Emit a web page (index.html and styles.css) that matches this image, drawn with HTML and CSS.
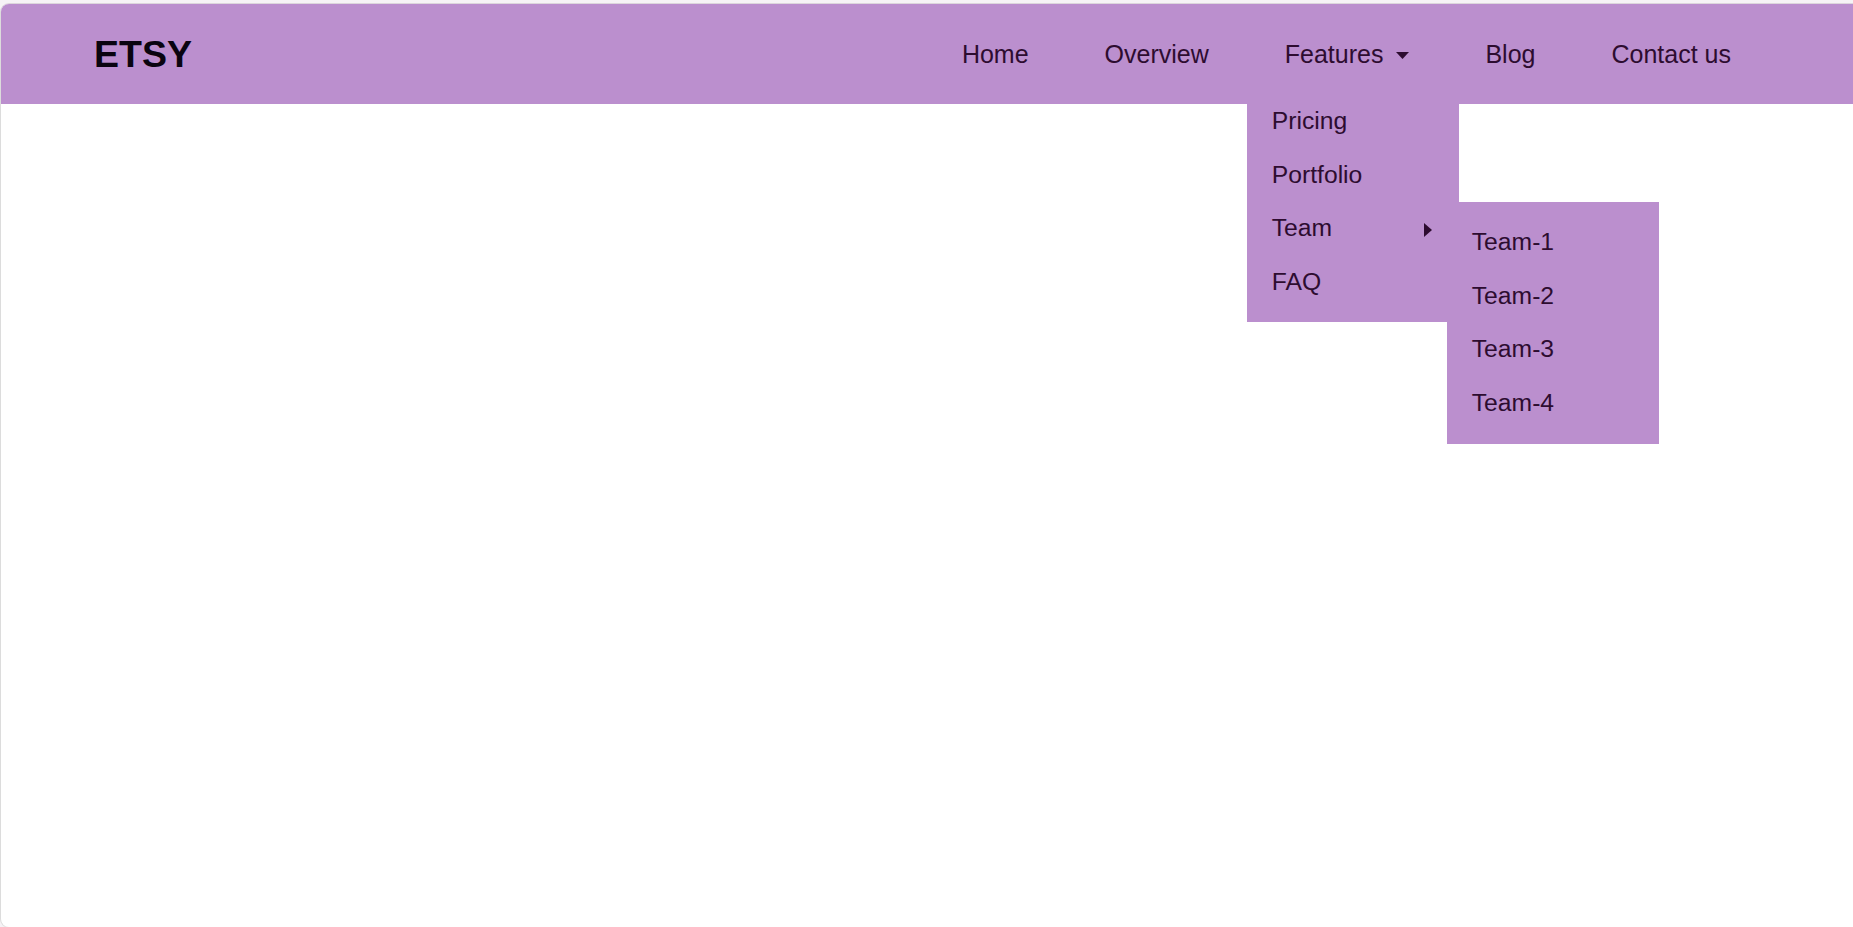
FILE: index.html
```html
<!DOCTYPE html>
<html lang="en">
<head>
<meta charset="utf-8">
<title>ETSY</title>
<link rel="stylesheet" href="styles.css">
</head>
<body>
<div class="frame">
  <header class="header">
    <div class="logo">ETSY</div>
    <ul class="nav">
      <li class="nav-item"><a class="nav-link" href="#">Home</a></li>
      <li class="nav-item"><a class="nav-link" href="#">Overview</a></li>
      <li class="nav-item has-drop">
        <a class="nav-link" href="#">Features
          <svg class="caret-down" width="13" height="7" viewBox="0 0 13 7"><polygon points="0,0 13,0 6.5,7" fill="currentColor"/></svg>
        </a>
        <ul class="dropdown">
          <li class="drop-item"><a href="#">Pricing</a></li>
          <li class="drop-item"><a href="#">Portfolio</a></li>
          <li class="drop-item has-sub">
            <a href="#">Team</a>
            <svg class="caret-right" width="8" height="14" viewBox="0 0 8 14"><polygon points="0,0 8,7 0,14" fill="currentColor"/></svg>
            <ul class="submenu">
              <li class="drop-item"><a href="#">Team-1</a></li>
              <li class="drop-item"><a href="#">Team-2</a></li>
              <li class="drop-item"><a href="#">Team-3</a></li>
              <li class="drop-item"><a href="#">Team-4</a></li>
            </ul>
          </li>
          <li class="drop-item"><a href="#">FAQ</a></li>
        </ul>
      </li>
      <li class="nav-item"><a class="nav-link" href="#">Blog</a></li>
      <li class="nav-item"><a class="nav-link" href="#">Contact us</a></li>
    </ul>
  </header>
</div>
</body>
</html>
```

FILE: styles.css
```css
html, body {
  margin: 0;
  padding: 0;
  height: 100%;
}
body {
  background: #f6f3f6;
  font-family: "Liberation Sans", Arial, sans-serif;
  overflow: hidden;
}
.frame {
  margin-top: 3px;
  height: calc(100vh - 4px);
  background: #ffffff;
  border-top: 1px solid #dcd6dc;
  border-left: 1px solid #dcdcdc;
  border-bottom: 1px solid #e4e4e4;
  border-radius: 9px 0 0 9px;
}
.header {
  display: flex;
  align-items: stretch;
  height: 100px;
  background: #bb8fce;
  border-top-left-radius: 8px;
  padding: 0 84px 0 93px;
}
.logo {
  display: flex;
  align-items: center;
  font-size: 37.5px;
  font-weight: bold;
  color: #0a0410;
  padding-top: 1px;
}
.nav {
  display: flex;
  align-items: stretch;
  margin: 0 0 0 auto;
  padding: 0;
  list-style: none;
}
.nav-item {
  position: relative;
  display: flex;
  align-items: center;
  padding: 0 38px;
}
.nav-link {
  display: flex;
  align-items: center;
  font-size: 25px;
  color: #2d0c30;
  text-decoration: none;
}
.caret-down {
  margin-left: 13px;
  margin-top: 3px;
}
.dropdown {
  position: absolute;
  top: 78px;
  left: 0;
  width: 212px;
  margin: 0;
  padding: 12px 0 14px;
  list-style: none;
  background: #bb8fce;
}
.drop-item {
  position: relative;
  display: flex;
  align-items: center;
  padding: 12px 25px;
  line-height: 29.5px;
  font-size: 24.7px;
}
.drop-item a {
  color: #2d0c30;
  text-decoration: none;
}
.caret-right {
  margin-left: auto;
  margin-right: 2px;
  margin-top: 4px;
  color: #2d0c30;
}
.submenu {
  position: absolute;
  top: 1px;
  left: 200px;
  width: 212px;
  margin: 0;
  padding: 13px 0 15px;
  list-style: none;
  background: #bb8fce;
  z-index: 2;
}
```
